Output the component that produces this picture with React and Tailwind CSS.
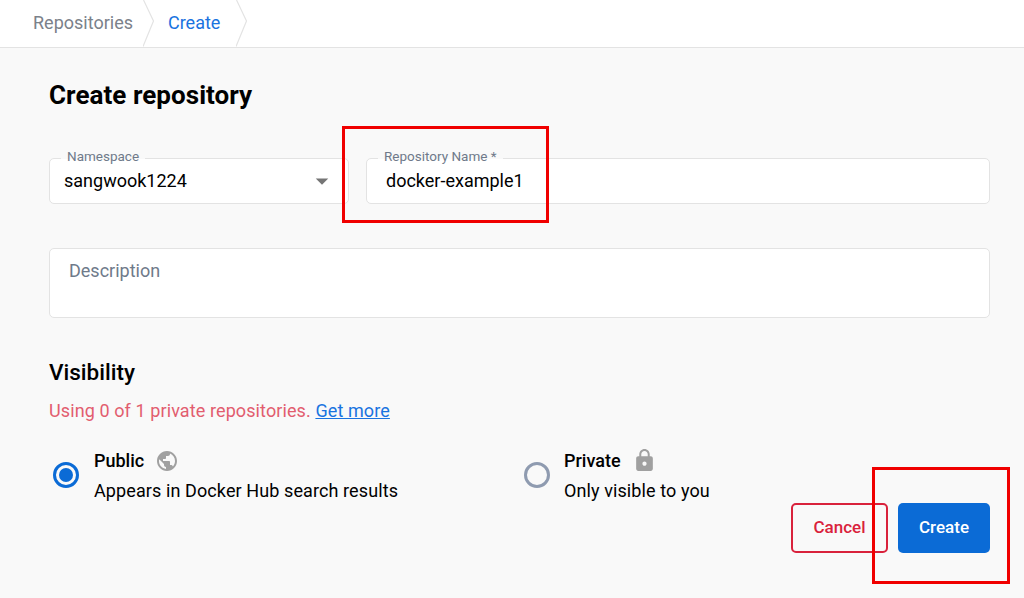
import React from "react";
import { MdPublic, MdLock, MdArrowDropDown } from "react-icons/md";

const Chevron = ({ className }) => (
  <svg className={`absolute top-0 ${className}`} width="12" height="47" viewBox="0 0 12 47" fill="none">
    <path d="M0.5 0 L10.5 21 L0 46.5" stroke="#e3e3e3" strokeWidth="1.2" />
  </svg>
);

const Radio = ({ on }) => (
  <div className={`flex h-[26px] w-[26px] shrink-0 -translate-y-[1px] items-center justify-center rounded-full border-[3px] ${on ? "border-[#0b6bd6]" : "border-[#8f9bb0]"}`}>
    {on && <div className="h-[14px] w-[14px] rounded-full bg-[#0b6bd6]" />}
  </div>
);

const labelClass =
  "absolute -top-[11px] left-[11px] bg-[linear-gradient(to_bottom,#f9f9f9_68%,#ffffff_68%)] px-[6px] text-[13.5px] leading-[16px] text-[#6f7a8a]";

export default function App() {
  return (
    <div className="flex h-[598px] w-[1024px] flex-col overflow-hidden bg-[#f9f9f9] font-['Roboto',sans-serif] text-black">
      <div className="flex h-[48px] shrink-0 items-center gap-[35px] border-b border-[#e3e3e3] bg-white pl-[33px] text-[18px]">
        <div className="relative flex h-full -translate-y-[1px] items-center">
          <span className="text-[#7b818a]">Repositories</span>
          <Chevron className="-right-[22px] translate-y-[1px]" />
        </div>
        <div className="relative flex h-full -translate-y-[1px] items-center">
          <span className="text-[#1a73e0]">Create</span>
          <Chevron className="-right-[28px] translate-y-[1px]" />
        </div>
      </div>

      <div className="flex flex-col px-[49px] pr-[34px]">
        <h1 className="mt-[29px] text-[26px] font-bold leading-[36px] tracking-[0.05px]">Create repository</h1>

        <div className="mt-[45px] flex gap-[17px]">
          <div className="relative flex h-[46px] w-[300px] items-center justify-between rounded-[5px] border border-[#e3e3e3] bg-white pl-[14px] text-[18px]">
            <span className={labelClass}>Namespace</span>
            <span className="-translate-y-[1px]">sangwook1224</span>
            <MdArrowDropDown className="mr-[11px] text-[#757575]" size={30} />
          </div>
          <div className="relative flex h-[46px] flex-1 items-center rounded-[5px] border border-[#e3e3e3] bg-white pl-[19px] text-[18px]">
            <span className={labelClass}>Repository Name *</span>
            <span className="-translate-y-[1px]">docker-example1</span>
          </div>
        </div>

        <div className="mt-[44px] h-[70px] rounded-[5px] border border-[#e3e3e3] bg-white pl-[19px] pt-[10px] text-[18px] leading-[24px] text-[#6f7a8a]">
          Description
        </div>

        <h2 className="mt-[38px] text-[22.5px] font-medium leading-[32px]">Visibility</h2>

        <p className="mt-[11px] text-[18px] leading-[24px] tracking-[0.1px] text-[#e25d6f]">
          Using 0 of 1 private repositories.{" "}
          <a className="text-[#1a73e0] underline">Get more</a>
        </p>

        <div className="mt-[25px] flex h-[55px]">
          <div className="flex w-[471px] items-center gap-[15px] pl-[4px]">
            <Radio on />
            <div>
              <div className="flex h-[24px] items-center gap-[11px] text-[18px] font-medium leading-[24px]">
                Public <MdPublic className="text-[#a0a0a0]" size={24} />
              </div>
              <div className="mt-[6px] text-[18px] leading-[24px] tracking-[0.1px]">Appears in Docker Hub search results</div>
            </div>
          </div>
          <div className="flex items-center gap-[14px] pl-[4px]">
            <Radio />
            <div>
              <div className="flex h-[24px] items-center gap-[11px] text-[18px] font-medium leading-[24px]">
                Private <MdLock className="text-[#a0a0a0]" size={25} />
              </div>
              <div className="mt-[6px] text-[18px] leading-[24px] tracking-[0.1px]">Only visible to you</div>
            </div>
          </div>
        </div>

        <div className="flex justify-end gap-[10px]">
          <button className="h-[50px] w-[97px] rounded-[5px] border-2 border-[#d9223c] text-[17px] font-medium text-[#d9223c]">Cancel</button>
          <button className="h-[50px] w-[92px] rounded-[5px] bg-[#0b6bd6] text-[17px] font-medium text-white">Create</button>
        </div>
      </div>

      <div className="pointer-events-none absolute left-[342px] top-[126px] h-[97px] w-[207px] border-[3px] border-[#f00000]" />
      <div className="pointer-events-none absolute left-[872px] top-[467px] h-[117px] w-[138px] border-[3px] border-[#f00000]" />
    </div>
  );
}
